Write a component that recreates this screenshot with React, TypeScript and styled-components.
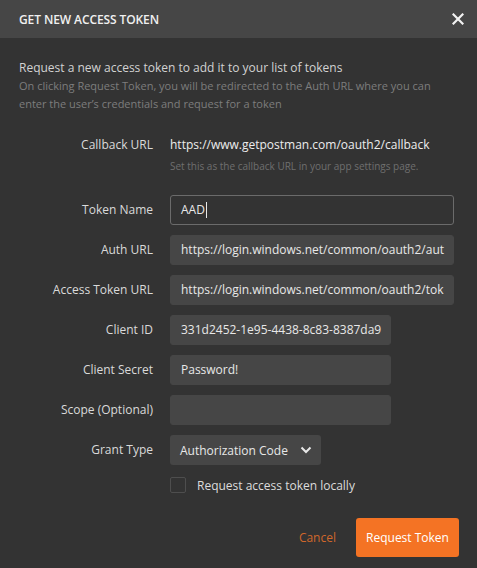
import * as React from 'react';
import styled, { createGlobalStyle } from 'styled-components';

const GlobalStyle = createGlobalStyle`
  html, body {
    margin: 0;
    padding: 0;
    background: #333333;
  }
  * {
    box-sizing: border-box;
  }
`;

const fields = [
  { label: 'Token Name', value: 'AAD', wide: true, focused: true },
  { label: 'Auth URL', value: 'https://login.windows.net/common/oauth2/aut', wide: true },
  { label: 'Access Token URL', value: 'https://login.windows.net/common/oauth2/tok', wide: true },
  { label: 'Client ID', value: '331d2452-1e95-4438-8c83-8387da9' },
  { label: 'Client Secret', value: 'Password!' },
  { label: 'Scope (Optional)', value: '' },
];

const Modal = styled.div`
  width: 477px;
  height: 568px;
  background: #333333;
  font-family: 'Open Sans', 'Noto Sans', sans-serif;
  display: flex;
  flex-direction: column;
  overflow: hidden;
`;

const Header = styled.div`
  flex-shrink: 0;
  height: 38px;
  background: #464646;
  display: flex;
  align-items: center;
  justify-content: space-between;
  padding: 0 12px 0 19px;
`;

const Title = styled.div`
  color: #f0f0f0;
  font-size: 12px;
  font-weight: 600;
  letter-spacing: -0.1px;
`;

const CloseButton = styled.button`
  background: none;
  border: none;
  padding: 0;
  width: 14px;
  height: 14px;
  display: flex;
  align-items: center;
  justify-content: center;
  cursor: pointer;
`;

const Body = styled.div`
  padding: 21px 18px 0 19px;
  display: flex;
  flex-direction: column;
`;

const Intro = styled.div`
  font-size: 12px;
  line-height: 18px;
  color: #d2d2d2;
  white-space: nowrap;
`;

const IntroMuted = styled.div`
  font-size: 11px;
  line-height: 18px;
  color: #7d7d7d;
  white-space: nowrap;
`;

const Form = styled.div`
  margin-top: 17px;
  display: grid;
  grid-template-columns: 134px 1fr;
  column-gap: 17px;
  row-gap: 10px;
  align-items: center;
`;

const Label = styled.div<{ $top?: boolean }>`
  text-align: right;
  font-size: 12px;
  color: #dadada;
  line-height: 30px;
  align-self: ${p => (p.$top ? 'start' : 'center')};
`;

const Callback = styled.div`
  margin-bottom: 13px;
`;

const CallbackValue = styled.div`
  font-size: 12px;
  line-height: 30px;
  color: #ededed;
  white-space: nowrap;
`;

const Hint = styled.div`
  font-size: 10px;
  line-height: 12px;
  color: #6f6f6f;
`;

const Input = styled.div<{ $wide?: boolean; $focused?: boolean }>`
  width: ${p => (p.$wide ? '284px' : '221px')};
  height: 30px;
  border-radius: 3px;
  background: ${p => (p.$focused ? '#333333' : '#464646')};
  border: 1px solid ${p => (p.$focused ? '#6b6b6b' : '#464646')};
  padding: 0 10px;
  font-size: 12px;
  color: #e8e8e8;
  line-height: 28px;
  white-space: nowrap;
  overflow: hidden;
  display: flex;
  align-items: center;
`;

const Caret = styled.span`
  display: inline-block;
  width: 1px;
  height: 16px;
  background: #e8e8e8;
  margin-left: 1px;
`;

const Select = styled.div`
  width: 151px;
  height: 30px;
  border-radius: 3px;
  background: #464646;
  display: flex;
  align-items: center;
  justify-content: space-between;
  padding: 0 9px 0 10px;
  font-size: 12px;
  color: #e8e8e8;
`;

const CheckRow = styled.label`
  grid-column: 2;
  display: flex;
  align-items: center;
  gap: 11px;
  height: 20px;
  font-size: 12px;
  color: #dcdcdc;
`;

const Checkbox = styled.span`
  width: 16px;
  height: 16px;
  border: 1px solid #4e4e4e;
  border-radius: 2px;
  background: #333333;
`;

const Footer = styled.div`
  margin-top: 23px;
  display: flex;
  justify-content: flex-end;
  align-items: center;
  gap: 20px;
`;

const CancelButton = styled.button`
  background: none;
  border: none;
  padding: 0;
  font-family: inherit;
  font-size: 12px;
  color: #d0672b;
  cursor: pointer;
`;

const PrimaryButton = styled.button`
  width: 103px;
  height: 39px;
  border: none;
  border-radius: 3px;
  background: #f47324;
  color: #ffffff;
  font-family: inherit;
  font-size: 12px;
  cursor: pointer;
`;

const App = () => (
  <Modal>
    <GlobalStyle />
    <Header>
      <Title>GET NEW ACCESS TOKEN</Title>
      <CloseButton aria-label="Close">
        <svg width="12" height="12" viewBox="0 0 12 12">
          <path d="M1.5 1.5 L10.5 10.5 M10.5 1.5 L1.5 10.5" stroke="#f2f2f2" strokeWidth="2.2" strokeLinecap="square" />
        </svg>
      </CloseButton>
    </Header>
    <Body>
      <Intro>Request a new access token to add it to your list of tokens</Intro>
      <IntroMuted>
        On clicking Request Token, you will be redirected to the Auth URL where you can
        <br />
        enter the user&rsquo;s credentials and request for a token
      </IntroMuted>
      <Form>
        <Label $top>Callback URL</Label>
        <Callback>
          <CallbackValue>https://www.getpostman.com/oauth2/callback</CallbackValue>
          <Hint>Set this as the callback URL in your app settings page.</Hint>
        </Callback>
        {fields.map(field => (
          <React.Fragment key={field.label}>
            <Label>{field.label}</Label>
            <Input $wide={field.wide} $focused={field.focused}>
              {field.value}
              {field.focused && <Caret />}
            </Input>
          </React.Fragment>
        ))}
        <Label>Grant Type</Label>
        <Select>
          Authorization Code
          <svg width="12" height="8" viewBox="0 0 12 8">
            <path d="M1.5 1.5 L6 6 L10.5 1.5" stroke="#e8e8e8" strokeWidth="2" fill="none" />
          </svg>
        </Select>
        <CheckRow>
          <Checkbox />
          Request access token locally
        </CheckRow>
      </Form>
      <Footer>
        <CancelButton>Cancel</CancelButton>
        <PrimaryButton>Request Token</PrimaryButton>
      </Footer>
    </Body>
  </Modal>
);

export default App;
